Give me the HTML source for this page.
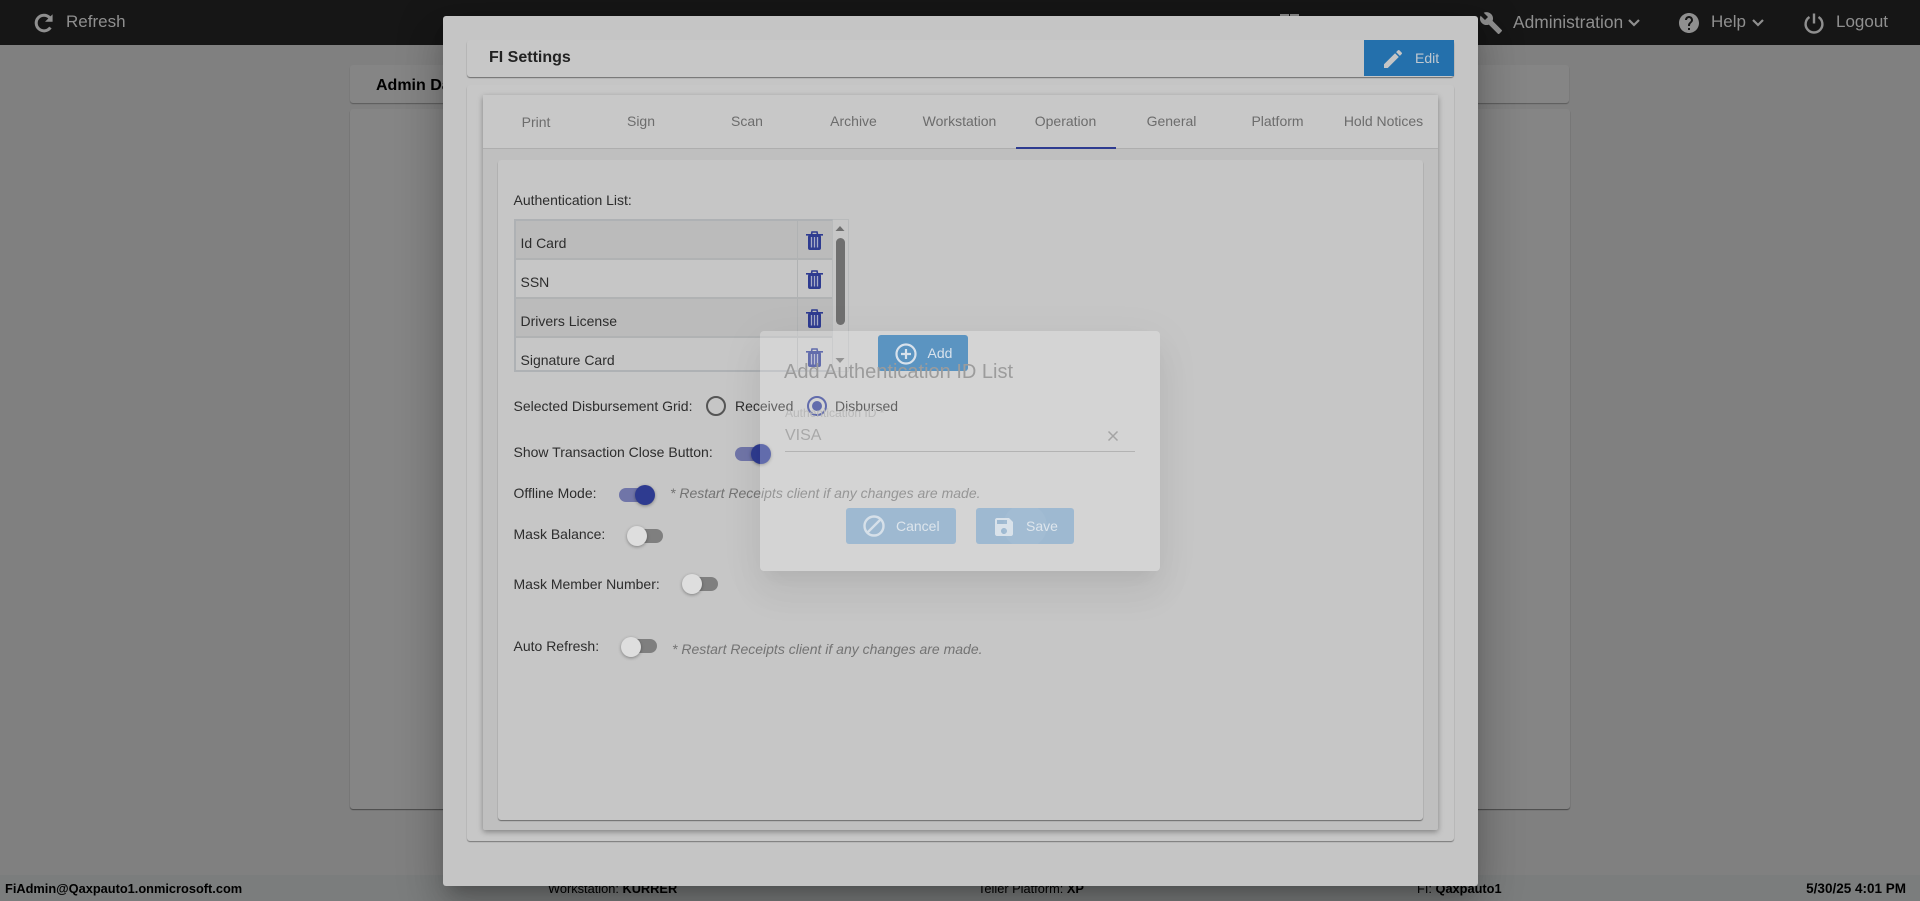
<!DOCTYPE html>
<html><head><meta charset="utf-8"><title>FI Settings</title>
<style>
*{box-sizing:border-box}
html,body{margin:0;padding:0;width:1920px;height:901px;overflow:hidden;background:#808080;font-family:"Liberation Sans",sans-serif}
.a{position:absolute}
.t{position:absolute;white-space:nowrap;line-height:20px;height:20px}
.c{transform:translateX(-50%)}
.tab{font-size:14px;color:#6c6c6c;top:111px}
.lbl{font-size:14px;color:#2d2d2d}
.note{font-size:14px;font-style:italic;color:#737373}
.nav{font-size:17px;color:#8f8f8f;top:13px}
.foot{font-size:12.8px;color:#000;top:879px}
.foot b{font-weight:700}
.track{position:absolute;width:34px;height:14px;border-radius:7px}
.knob{position:absolute;width:20px;height:20px;border-radius:50%;box-shadow:0 1px 3px rgba(0,0,0,.35)}
svg{position:absolute;overflow:visible}
</style></head>
<body>
<!-- top bar -->
<div class="a" style="left:0;top:0;width:1920px;height:45px;background:#161616"></div>
<svg style="left:32px;top:11px" width="24" height="24" viewBox="0 0 24 24"><path fill="none" stroke="#8f8f8f" stroke-width="3" d="M18.4 16.500A7.800 7.800 0 1 1 17.600 6.600"/><path fill="#8f8f8f" d="M20.600 3.200v7.600h-7.600z"/></svg>
<div class="t nav" style="left:66px;top:12px">Refresh</div>
<div class="a" style="left:1280px;top:14px;width:9px;height:3px;background:#8a8a8a"></div>
<div class="a" style="left:1290px;top:14px;width:9px;height:3px;background:#8a8a8a"></div>
<svg style="left:1479px;top:11px" width="24" height="24" viewBox="0 0 24 24"><path fill="#8f8f8f" d="M22.700 19l-9.100-9.100c.9-2.300.4-5-1.500-6.900-2-2-5-2.400-7.400-1.300L9 6 6 9 1.600 4.700C.4 7.100.9 10.100 2.900 12.100c1.900 1.900 4.600 2.400 6.900 1.500l9.100 9.100c.4.4 1 .4 1.400 0l2.300-2.300c.5-.4.5-1.100.1-1.400z"/></svg>
<div class="t nav" style="left:1513px;font-size:17.4px;top:12px">Administration</div>
<svg style="left:1628px;top:18px" width="12" height="10" viewBox="0 0 12 10"><path fill="none" stroke="#8f8f8f" stroke-width="2.200" d="M1 2l5 5 5-5"/></svg>
<svg style="left:1677px;top:11px" width="24" height="24" viewBox="0 0 24 24"><path fill="#8f8f8f" d="M12 2C6.480 2 2 6.480 2 12s4.480 10 10 10 10-4.480 10-10S17.520 2 12 2zm1 17h-2v-2h2v2zm2.070-7.750l-.9.920C13.450 12.900 13 13.500 13 15h-2v-.5c0-1.100.45-2.100 1.170-2.830l1.240-1.260c.37-.36.59-.86.59-1.410 0-1.100-.9-2-2-2s-2 .9-2 2H8c0-2.210 1.790-4 4-4s4 1.790 4 4c0 .88-.36 1.680-.93 2.250z"/></svg>
<div class="t nav" style="left:1711px;top:12px">Help</div>
<svg style="left:1752px;top:18px" width="12" height="10" viewBox="0 0 12 10"><path fill="none" stroke="#8f8f8f" stroke-width="2.200" d="M1 2l5 5 5-5"/></svg>
<svg style="left:1802px;top:11px" width="24" height="24" viewBox="0 0 24 24"><path fill="none" stroke="#8f8f8f" stroke-width="2.400" d="M7.500 6a8.400 8.400 0 1 0 9 0M12 2.500v10"/></svg>
<div class="t nav" style="left:1836px;top:12px">Logout</div>

<!-- background cards -->
<div class="a" style="left:350px;top:65px;width:1219px;height:38px;background:#858585;border-radius:3px;box-shadow:0 1px 1px rgba(0,0,0,.3)"></div>
<div class="t" style="left:376px;top:76px;font-size:16px;font-weight:700;color:#000">Admin Dashboard</div>
<div class="a" style="left:350px;top:109px;width:1220px;height:700px;background:#858585;border-radius:3px;box-shadow:0 1px 1px rgba(0,0,0,.45)"></div>

<!-- footer -->
<div class="a" style="left:0;top:875px;width:1920px;height:26px;background:#7b7d7d"></div>
<div class="t foot" style="left:5px;font-weight:700">FiAdmin@Qaxpauto1.onmicrosoft.com</div>
<div class="t foot" style="left:548px">Workstation: <b>KURRER</b></div>
<div class="t foot" style="left:978px">Teller Platform: <b>XP</b></div>
<div class="t foot" style="left:1417px">FI: <b>Qaxpauto1</b></div>
<div class="t foot" style="right:14px;font-weight:700;font-size:13.500px">5/30/25 4:01 PM</div>

<!-- FI settings modal -->
<div class="a" style="left:443px;top:16px;width:1035px;height:870px;background:#c5c5c5;border-radius:3px;box-shadow:0 11px 15px -7px rgba(0,0,0,.2),0 24px 38px 3px rgba(0,0,0,.14),0 9px 46px 8px rgba(0,0,0,.12)"></div>
<div class="a" style="left:467px;top:40px;width:987px;height:37px;background:#c7c7c7;border-radius:3px;box-shadow:0 1px 1px rgba(0,0,0,.45)"></div>
<div class="t" style="left:489px;top:48px;font-size:16px;font-weight:700;color:#222">FI Settings</div>
<div class="a" style="left:1364px;top:40px;width:90px;height:36px;background:#2470ac"></div>
<svg style="left:1381px;top:47px" width="24" height="24" viewBox="0 0 24 24"><path fill="#c5c5c5" d="M3 17.250V21h3.750L17.810 9.940l-3.750-3.750L3 17.250zM20.710 7.040c.39-.39.39-1.020 0-1.410l-2.340-2.340c-.39-.39-1.020-.39-1.410 0l-1.830 1.830 3.750 3.750 1.830-1.830z"/></svg>
<div class="t" style="left:1415px;top:48px;font-size:14px;color:#c0c8d0">Edit</div>

<div class="a" style="left:467px;top:85px;width:987px;height:756px;background:#c7c7c7;border-radius:3px;box-shadow:0 1px 1px rgba(0,0,0,.4)"></div>
<div class="a" style="left:483px;top:95px;width:955px;height:735px;background:#bfbfbf;border-radius:2px;box-shadow:0 2px 6px rgba(0,0,0,.35)"></div>
<div class="a" style="left:483px;top:95px;width:955px;height:54px;background:#c8c8c8;border-bottom:1px solid #aeaeae"></div>
<div class="t tab c" style="left:536px;top:112px">Print</div>
<div class="t tab c" style="left:641px">Sign</div>
<div class="t tab c" style="left:747px">Scan</div>
<div class="t tab c" style="left:853.500px">Archive</div>
<div class="t tab c" style="left:959.500px">Workstation</div>
<div class="t tab c" style="left:1065.500px">Operation</div>
<div class="t tab c" style="left:1171.500px">General</div>
<div class="t tab c" style="left:1277.500px">Platform</div>
<div class="t tab c" style="left:1383.500px">Hold Notices</div>
<div class="a" style="left:1016px;top:147px;width:100px;height:2px;background:#2e3b90"></div>

<div class="a" style="left:498px;top:160px;width:925px;height:660px;background:#c6c6c6;border-radius:3px;box-shadow:0 1px 1px rgba(0,0,0,.45)"></div>

<div class="t lbl" style="left:513.500px;top:190px">Authentication List:</div>

<!-- table -->
<div class="a" style="left:514px;top:219px;width:335px;height:153px;border:1px solid #b8babb"></div>
<div class="a" style="left:514px;top:219px;width:319px;height:153px;overflow:hidden;border:2px solid #aeb1b4;border-right:1px solid #b8babb">
  <div class="a" style="left:0;top:0;width:316px;height:39px;background:#bbb;border-bottom:2px solid #b0b2b3"></div>
  <div class="a" style="left:0;top:39px;width:316px;height:39px;background:#c6c6c6;border-bottom:2px solid #b0b2b3"></div>
  <div class="a" style="left:0;top:78px;width:316px;height:39px;background:#bbb;border-bottom:2px solid #b0b2b3"></div>
  <div class="a" style="left:0;top:117px;width:316px;height:39px;background:#c6c6c6"></div>
  <div class="a" style="left:281px;top:0;width:1px;height:152px;background:#b0b2b3"></div>
</div>
<div class="t lbl" style="left:520.500px;top:233px">Id Card</div>
<div class="t lbl" style="left:520.500px;top:272px">SSN</div>
<div class="t lbl" style="left:520.500px;top:311px">Drivers License</div>
<div class="t lbl" style="left:520.500px;top:350px">Signature Card</div>
<svg style="left:806px;top:231px" width="17" height="19" viewBox="0 0 17 19"><path fill="none" stroke="#2e3b90" stroke-width="1.600" d="M5.500 3.500L6 1h5l.5 2.500"/><path stroke="#2e3b90" stroke-width="1.600" d="M0 3.800h17"/><rect x="2" y="4" width="13" height="15" rx="2" fill="#2e3b90"/><path stroke="#a7abc6" stroke-width="1.300" d="M5.500 6v10.500M8.500 6v10.500M11.500 6v10.500"/></svg>
<svg style="left:806px;top:270px" width="17" height="19" viewBox="0 0 17 19"><path fill="none" stroke="#2e3b90" stroke-width="1.600" d="M5.500 3.500L6 1h5l.5 2.500"/><path stroke="#2e3b90" stroke-width="1.600" d="M0 3.800h17"/><rect x="2" y="4" width="13" height="15" rx="2" fill="#2e3b90"/><path stroke="#a7abc6" stroke-width="1.300" d="M5.500 6v10.500M8.500 6v10.500M11.500 6v10.500"/></svg>
<svg style="left:806px;top:309px" width="17" height="19" viewBox="0 0 17 19"><path fill="none" stroke="#2e3b90" stroke-width="1.600" d="M5.500 3.500L6 1h5l.5 2.500"/><path stroke="#2e3b90" stroke-width="1.600" d="M0 3.800h17"/><rect x="2" y="4" width="13" height="15" rx="2" fill="#2e3b90"/><path stroke="#a7abc6" stroke-width="1.300" d="M5.500 6v10.500M8.500 6v10.500M11.500 6v10.500"/></svg>
<svg style="left:806px;top:348px" width="17" height="19" viewBox="0 0 17 19"><path fill="none" stroke="#2e3b90" stroke-width="1.600" d="M5.500 3.500L6 1h5l.5 2.500"/><path stroke="#2e3b90" stroke-width="1.600" d="M0 3.800h17"/><rect x="2" y="4" width="13" height="15" rx="2" fill="#2e3b90"/><path stroke="#a7abc6" stroke-width="1.300" d="M5.500 6v10.500M8.500 6v10.500M11.500 6v10.500"/></svg>
<!-- scrollbar -->
<svg style="left:835px;top:225px" width="10" height="7" viewBox="0 0 10 7"><path fill="#6f6f6f" d="M5 1l4.500 5h-9z"/></svg>
<div class="a" style="left:836px;top:238px;width:9px;height:87px;background:#6f6f6f;border-radius:4.500px"></div>
<svg style="left:835px;top:357px" width="10" height="7" viewBox="0 0 10 7"><path fill="#6f6f6f" d="M0.500 1h9l-4.500 5z"/></svg>

<!-- add button -->
<div class="a" style="left:878px;top:335px;width:90px;height:36px;background:#2470ac;border-radius:3px"></div>

<div class="t lbl" style="left:513.500px;top:396px">Selected Disbursement Grid:</div>
<div class="a" style="left:706px;top:396px;width:20px;height:20px;border:2px solid #555;border-radius:50%"></div>
<div class="t lbl" style="left:735px;top:396px">Received</div>
<div class="a" style="left:807px;top:396px;width:20px;height:20px;border:2px solid #2e3b90;border-radius:50%"></div>
<div class="a" style="left:812px;top:401px;width:10px;height:10px;background:#2e3b90;border-radius:50%"></div>
<div class="t lbl" style="left:835px;top:396px">Disbursed</div>

<div class="t lbl" style="left:513.500px;top:442px">Show Transaction Close Button:</div>
<div class="track" style="left:735px;top:447px;background:#7075a8"></div>
<div class="knob" style="left:751px;top:444px;background:#2e3b90"></div>

<div class="t lbl" style="left:513.500px;top:483px">Offline Mode:</div>
<div class="track" style="left:619px;top:488px;background:#7075a8"></div>
<div class="knob" style="left:635px;top:485px;background:#2e3b90"></div>
<div class="t note" style="left:670px;top:483px">* Restart Receipts client if any changes are made.</div>

<div class="t lbl" style="left:513.500px;top:524px">Mask Balance:</div>
<div class="track" style="left:629px;top:529px;background:#7f7f7f"></div>
<div class="knob" style="left:627px;top:526px;background:#dedede"></div>

<div class="t lbl" style="left:513.500px;top:574px">Mask Member Number:</div>
<div class="track" style="left:684px;top:577px;background:#7f7f7f"></div>
<div class="knob" style="left:682px;top:574px;background:#dedede"></div>

<div class="t lbl" style="left:513.500px;top:636px">Auto Refresh:</div>
<div class="track" style="left:623px;top:639px;background:#7f7f7f"></div>
<div class="knob" style="left:621px;top:637px;background:#dedede"></div>
<div class="t note" style="left:672px;top:639px">* Restart Receipts client if any changes are made.</div>

<!-- fading dialog -->
<div class="a" style="left:760px;top:331px;width:400px;height:240px;background:rgba(255,255,255,.25);border-radius:4px;box-shadow:0 11px 15px -7px rgba(0,0,0,.05),0 24px 38px 3px rgba(0,0,0,.04),0 9px 46px 8px rgba(0,0,0,.03)"></div>
<svg style="left:894px;top:342px" width="24" height="24" viewBox="0 0 24 24"><circle cx="12" cy="12" r="9.500" fill="none" stroke="#d8e2ec" stroke-width="2.200"/><path stroke="#d8e2ec" stroke-width="2.200" d="M12 7v10M7 12h10"/></svg>
<div class="t c" style="left:940px;top:343px;font-size:14px;color:#d8e2ec">Add</div>
<div class="t" style="left:784px;top:362px;font-size:20px;color:#9c9c9c">Add Authentication ID List</div>
<div class="t" style="left:785px;top:403px;font-size:12px;color:#b8b8b8">Authentication ID *</div>
<div class="t" style="left:785px;top:426px;font-size:16px;color:#a8a8a8">VISA</div>
<svg style="left:1107px;top:430px" width="12" height="12" viewBox="0 0 12 12"><path stroke="#a4a4a4" stroke-width="1.500" d="M1.500 1.500l9 9M10.500 1.500l-9 9"/></svg>
<div class="a" style="left:785px;top:451px;width:350px;height:1px;background:#b3b3b3"></div>

<div class="a" style="left:846px;top:508px;width:110px;height:36px;background:#9eb9d1;border-radius:3px"></div>
<svg style="left:862px;top:514px" width="24" height="24" viewBox="0 0 24 24"><circle cx="12" cy="12" r="9.500" fill="none" stroke="#d6e0e9" stroke-width="2.400"/><path stroke="#d6e0e9" stroke-width="2.400" d="M5.500 18.500L18.500 5.500"/></svg>
<div class="t" style="left:896px;top:516px;font-size:14px;color:#dde5ec">Cancel</div>

<div class="a" style="left:976px;top:508px;width:98px;height:36px;background:#9eb9d1;border-radius:3px;overflow:hidden"><div class="a" style="left:27px;top:-4px;width:44px;height:44px;border-radius:50%;background:rgba(255,255,255,.05)"></div></div>
<svg style="left:992px;top:515px" width="24" height="24" viewBox="0 0 24 24"><path fill="#d9e2ea" d="M17 3H5c-1.110 0-2 .9-2 2v14c0 1.100.89 2 2 2h14c1.100 0 2-.9 2-2V7l-4-4zm-5 16c-1.660 0-3-1.340-3-3s1.340-3 3-3 3 1.340 3 3-1.340 3-3 3zm3-10H5V5h10v4z"/></svg>
<div class="t" style="left:1026px;top:516px;font-size:14px;color:#dde5ec">Save</div>
</body></html>
